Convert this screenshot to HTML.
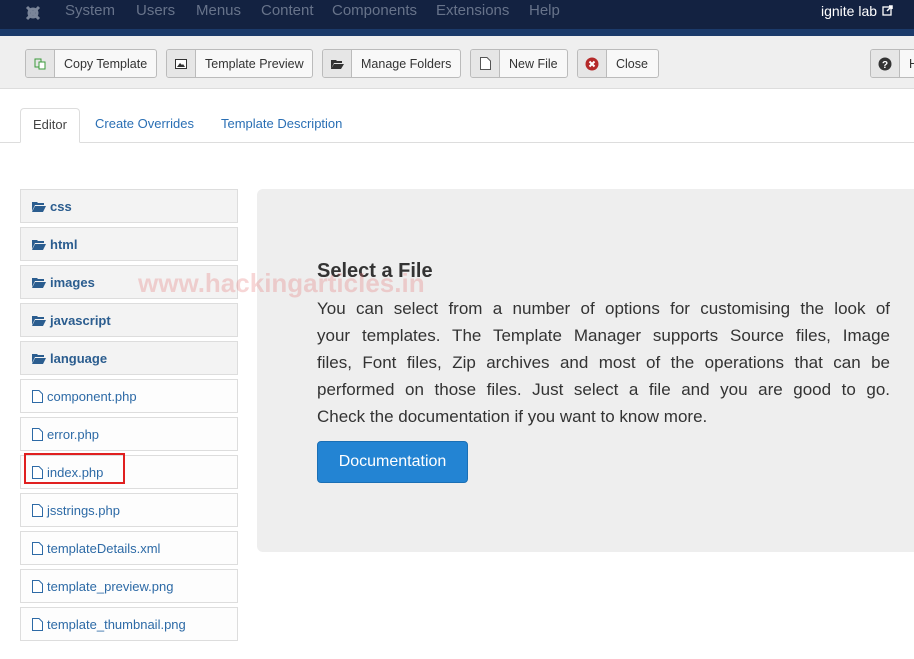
<!DOCTYPE html>
<html><head><style>
*{box-sizing:border-box;margin:0;padding:0}
body{width:914px;height:659px;overflow:hidden;background:#fff;font-family:"Liberation Sans",sans-serif;position:relative}
.nav{position:absolute;left:0;top:0;width:914px;height:29px;background:#132241}
.strip{position:absolute;left:0;top:29px;width:914px;height:7px;background:#1b3a6a}
.nav span{position:absolute;top:2px;font-size:15px;color:#67738a}
.tb{position:absolute;left:0;top:36px;width:914px;height:53px;background:#efefef;border-bottom:1px solid #ddd}
.btn{position:absolute;top:13px;height:29px;border:1px solid #bbb;border-radius:3px;background:#f8f8f8;font-size:12.5px;color:#333;display:flex;white-space:nowrap;overflow:hidden}
.btn .ic{width:29px;flex:none;background:#e6e6e6;border-right:1px solid #bbb;display:flex;align-items:center;justify-content:center}
.btn .t{padding:0 9px;line-height:28px}
.tabs{position:absolute;left:0;top:142px;width:914px;border-top:1px solid #ddd}
.tab{position:absolute;top:108px;font-size:13px;color:#2a6fb4;line-height:32px}
.item{position:absolute;left:20px;width:218px;height:34px;border:1px solid #ddd;font-size:13px;display:flex;align-items:center;padding-left:11px}
.item svg{margin-right:4px}
.fold{background:#f3f3f3;font-weight:bold;color:#2b5d8f}
.file{background:#fdfdfd;color:#2d6aa6}
.panel{position:absolute;left:257px;top:189px;width:670px;height:363px;background:#eeeeee;border-radius:6px}
.p div{text-align:justify;text-align-last:justify;white-space:nowrap;height:27px}
</style></head><body>
<div class="nav">
<svg style="position:absolute;left:24px;top:4px" width="18" height="18" viewBox="0 0 18 18"><g stroke="#7a8599" stroke-width="3" fill="none"><path d="M3 3L15 15M15 3L3 15"/><circle cx="9" cy="9" r="4"/></g></svg>
<span style="left:65px">System</span><span style="left:136px">Users</span><span style="left:196px">Menus</span><span style="left:261px">Content</span><span style="left:332px">Components</span><span style="left:436px">Extensions</span><span style="left:529px">Help</span>
<span style="left:821px;color:#fff;font-size:14px;top:3px">ignite lab</span>
<svg style="position:absolute;left:882px;top:5px" width="11" height="11"><rect x="1" y="2" width="8" height="8" fill="none" stroke="#fff" stroke-width="1.3"/><path d="M5 6L10 1M7 1H10V4" stroke="#fff" stroke-width="1.5" fill="none"/></svg>
</div>
<div class="strip"></div>
<div class="tb">
<div class="btn" style="left:25px;width:132px"><div class="ic"><svg width="12" height="12"><rect x="1" y="1" width="6" height="8" fill="none" stroke="#3a9a3a"/><rect x="5" y="4" width="6" height="7" fill="#fff" stroke="#3a9a3a"/></svg></div><div class="t">Copy Template</div></div>
<div class="btn" style="left:166px;width:147px"><div class="ic"><svg width="12" height="10"><rect x="0.5" y="0.5" width="11" height="9" fill="#fff" stroke="#333"/><path d="M2 8L5 4L7 6L8 5L10 8Z" fill="#333"/></svg></div><div class="t">Template Preview</div></div>
<div class="btn" style="left:322px;width:139px"><div class="ic"><svg width="13" height="10"><path d="M0 1H5L6 2H11V4H3L0 10Z M3 5H13L10 10H0Z" fill="#333"/></svg></div><div class="t">Manage Folders</div></div>
<div class="btn" style="left:470px;width:98px"><div class="ic"><svg width="11" height="13"><path d="M0.5 0.5H7L10.5 4V12.5H0.5Z" fill="#fff" stroke="#555"/></svg></div><div class="t">New File</div></div>
<div class="btn" style="left:577px;width:82px"><div class="ic"><svg width="14" height="14"><circle cx="7" cy="7" r="6.5" fill="#b52a2a"/><path d="M4.5 4.5L9.5 9.5M9.5 4.5L4.5 9.5" stroke="#fff" stroke-width="2"/></svg></div><div class="t">Close</div></div>
<div class="btn" style="left:870px;width:60px"><div class="ic"><svg width="14" height="14"><circle cx="7" cy="7" r="6.5" fill="#333"/><text x="7" y="11" font-size="10" font-weight="bold" fill="#fff" text-anchor="middle" font-family="Liberation Sans">?</text></svg></div><div class="t">H</div></div>
</div>
<div class="tabs"></div>
<div style="position:absolute;left:20px;top:108px;width:60px;height:35px;border:1px solid #ddd;border-bottom:1px solid #fff;border-radius:4px 4px 0 0;background:#fff;font-size:13px;color:#444;line-height:32px;text-align:center">Editor</div>
<div class="tab" style="left:95px">Create Overrides</div>
<div class="tab" style="left:221px">Template Description</div>

<svg width="0" height="0" style="position:absolute"><defs>
<symbol id="fo" viewBox="0 0 14 11"><path d="M0 1H5L6 2H12V4H3L0 10Z M3 5H14L11 11H0Z" fill="#2b5d8f"/></symbol>
<symbol id="fi" viewBox="0 0 11 13"><path d="M0.5 0.5H7L10.5 4V12.5H0.5Z" fill="#fff" stroke="#2d6aa6"/></symbol>
</defs></svg>
<div class="item fold" style="top:189px"><svg width="14" height="11"><use href="#fo"/></svg>css</div>
<div class="item fold" style="top:227px"><svg width="14" height="11"><use href="#fo"/></svg>html</div>
<div class="item fold" style="top:265px"><svg width="14" height="11"><use href="#fo"/></svg>images</div>
<div class="item fold" style="top:303px"><svg width="14" height="11"><use href="#fo"/></svg>javascript</div>
<div class="item fold" style="top:341px"><svg width="14" height="11"><use href="#fo"/></svg>language</div>
<div class="item file" style="top:379px"><svg width="11" height="13"><use href="#fi"/></svg>component.php</div>
<div class="item file" style="top:417px"><svg width="11" height="13"><use href="#fi"/></svg>error.php</div>
<div class="item file" style="top:455px"><svg width="11" height="13"><use href="#fi"/></svg>index.php</div>
<div class="item file" style="top:493px"><svg width="11" height="13"><use href="#fi"/></svg>jsstrings.php</div>
<div class="item file" style="top:531px"><svg width="11" height="13"><use href="#fi"/></svg>templateDetails.xml</div>
<div class="item file" style="top:569px"><svg width="11" height="13"><use href="#fi"/></svg>template_preview.png</div>
<div class="item file" style="top:607px"><svg width="11" height="13"><use href="#fi"/></svg>template_thumbnail.png</div>
<div style="position:absolute;left:24px;top:453px;width:101px;height:31px;border:2px solid #e02020"></div>

<div class="panel">
<div style="position:absolute;left:60px;top:71px;font-size:20px;font-weight:bold;color:#333">Select a File</div>
<div class="p" style="position:absolute;left:60px;top:106px;width:573px;font-size:17px;line-height:27px;color:#333">
<div>You can select from a number of options for customising the look of</div>
<div>your templates. The Template Manager supports Source files, Image</div>
<div>files, Font files, Zip archives and most of the operations that can be</div>
<div>performed on those files. Just select a file and you are good to go.</div>
<div style="text-align-last:left">Check the documentation if you want to know more.</div>
</div>
<div style="position:absolute;left:60px;top:252px;width:151px;height:42px;background:#2384d3;border:1px solid #1a6fb5;border-radius:4px;color:#fff;font-size:16px;line-height:40px;text-align:center">Documentation</div>
</div>
<div style="position:absolute;left:138px;top:268px;font-size:26px;font-weight:bold;color:rgba(230,120,120,0.3)">www.hackingarticles.in</div>
</body></html>
